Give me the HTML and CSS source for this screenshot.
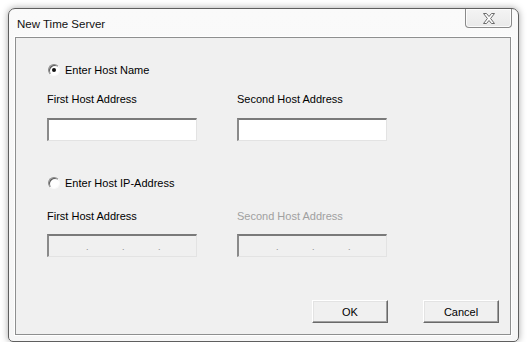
FILE: index.html
```html
<!DOCTYPE html>
<html>
<head>
<meta charset="utf-8">
<link rel="stylesheet" href="styles.css">
</head>
<body>
<div class="window">
  <div class="titlebar">
    <span class="title">New Time Server</span>
    <button class="close" aria-label="Close">
      <svg width="14" height="11" viewBox="0 0 14 11">
        <path d="M1.5 0.5 H4.5 L7 3.5 L9.5 0.5 H12.5 L8.6 5.5 L12.5 10.5 H9.5 L7 7.5 L4.5 10.5 H1.5 L5.4 5.5 Z" fill="#fdfdfd" stroke="#6b6b6b" stroke-width="1" stroke-linejoin="round"/>
      </svg>
    </button>
  </div>
  <div class="client">
    <div class="radio-row">
      <span class="radio checked"></span>
      <span class="radio-label">Enter Host Name</span>
    </div>
    <div class="fields">
      <div class="field">
        <div class="label">First Host Address</div>
        <div class="input"></div>
      </div>
      <div class="field">
        <div class="label">Second Host Address</div>
        <div class="input"></div>
      </div>
    </div>
    <div class="radio-row second">
      <span class="radio"></span>
      <span class="radio-label">Enter Host IP-Address</span>
    </div>
    <div class="fields lower">
      <div class="field">
        <div class="label">First Host Address</div>
        <div class="input ip"><span class="seg"></span><span class="dot">.</span><span class="seg"></span><span class="dot">.</span><span class="seg"></span><span class="dot">.</span></div>
      </div>
      <div class="field">
        <div class="label disabled">Second Host Address</div>
        <div class="input ip"><span class="seg"></span><span class="dot">.</span><span class="seg"></span><span class="dot">.</span><span class="seg"></span><span class="dot">.</span></div>
      </div>
    </div>
    <div class="buttons">
      <button class="btn">OK</button>
      <button class="btn">Cancel</button>
    </div>
  </div>
</div>
</body>
</html>
```
FILE: styles.css
```css
html, body {
  margin: 0;
  padding: 0;
  background: #ffffff;
}
body {
  padding: 8px 0 0 8px;
  font-family: "Liberation Sans", Arial, sans-serif;
  font-size: 11px;
  color: #000;
}
.window {
  width: 511px;
  height: 334px;
  border: 1px solid #5f5f5f;
  border-radius: 7px 7px 5px 5px;
  background: linear-gradient(180deg, #fafafa 0%, #f6f6f6 100%);
  box-shadow: 0 0 7px rgba(0,0,0,0.35);
  padding: 0 7px 6px 6px;
  box-sizing: border-box;
  display: flex;
  flex-direction: column;
}
.titlebar {
  height: 28px;
  display: flex;
  align-items: flex-start;
  justify-content: space-between;
  flex: none;
}
.title {
  font-size: 11.5px;
  margin-top: 9px;
  margin-left: 2px;
  color: #111;
}
.close {
  width: 47px;
  height: 19px;
  margin-right: -1px;
  border: 1px solid #8a8a8a;
  border-top: none;
  border-radius: 0 0 4px 4px;
  background: linear-gradient(180deg, #f4f4f4 0%, #e9e9e9 100%);
  box-shadow: inset 0 0 0 1px rgba(255,255,255,0.8);
  padding: 0;
  display: flex;
  align-items: center;
  justify-content: center;
}
.close svg { display: block; margin-top: 1px; }
.client {
  flex: 1;
  border: 1px solid #8e8f8f;
  box-shadow: 0 0 0 1px #ffffff;
  background: #f0f0f0;
  padding: 25px 0 0 31px;
  display: flex;
  flex-direction: column;
}
.radio-row {
  display: flex;
  align-items: center;
  height: 13px;
}
.radio-row.second {
  margin-top: 35px;
}
.radio {
  width: 12px;
  height: 12px;
  box-sizing: border-box;
  border-radius: 50%;
  border: 1px solid;
  border-color: #8a8a8a #fafafa #fafafa #8a8a8a;
  background: #ffffff;
  box-shadow: inset 1px 1px 0 #5a5a5a;
  position: relative;
  margin-left: 1px;
}
.radio.checked::after {
  content: "";
  position: absolute;
  left: 3px;
  top: 3px;
  width: 4px;
  height: 4px;
  border-radius: 50%;
  background: #111;
}
.radio-label {
  margin-left: 5px;
}
.fields {
  display: flex;
  gap: 40px;
  margin-top: 17px;
}
.fields.lower {
  margin-top: 21px;
}
.field {
  display: flex;
  flex-direction: column;
  width: 150px;
}
.label {
  height: 13px;
  line-height: 13px;
  margin-bottom: 12px;
}
.fields.lower .label {
  margin-bottom: 11px;
}
.label.disabled {
  color: #a0a0a0;
}
.input {
  width: 150px;
  height: 23px;
  box-sizing: border-box;
  background: #ffffff;
  border-top: 2px solid #7a7a7a;
  border-left: 2px solid #8a8a8a;
  border-right: 1px solid #e3e3e3;
  border-bottom: 1px solid #e3e3e3;
}
.input.ip {
  background: #f0f0f0;
  display: flex;
  align-items: center;
  padding-left: 2px;
}
.seg {
  width: 35px;
  flex: none;
}
.dot {
  width: 1px;
  color: #8a8a8a;
  font-size: 9px;
  line-height: 9px;
  margin-top: 2px;
}
.buttons {
  margin-top: auto;
  margin-bottom: 11px;
  display: flex;
  justify-content: flex-end;
  gap: 35px;
  padding-right: 11px;
}
.btn {
  width: 76px;
  height: 23px;
  box-sizing: border-box;
  font-family: "Liberation Sans", Arial, sans-serif;
  font-size: 11px;
  color: #000;
  background: #f0f0f0;
  border: 1px solid;
  border-color: #ffffff #696969 #696969 #ffffff;
  box-shadow: inset -1px -1px 0 #a0a0a0, inset 1px 1px 0 #e3e3e3;
  padding: 0;
}
```
